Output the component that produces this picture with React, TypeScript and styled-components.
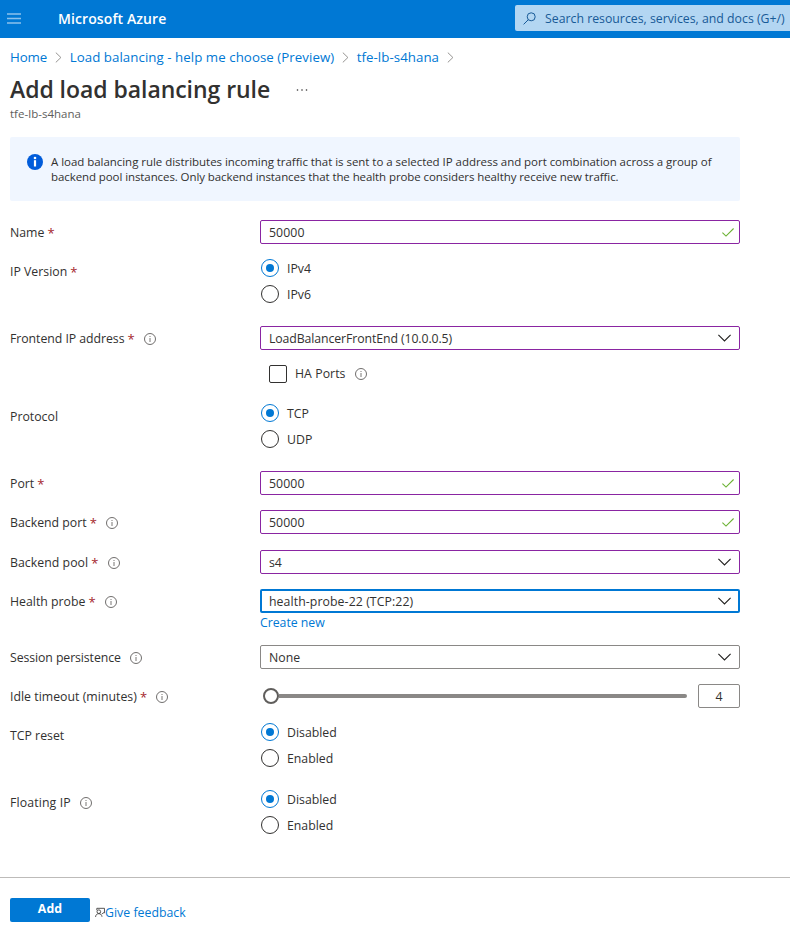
import React from 'react';
import styled, { createGlobalStyle } from 'styled-components';

const GlobalStyle = createGlobalStyle`
  *, *::before, *::after { box-sizing: border-box; }
  body { margin: 0; background: #fff; }
  body, button, input {
    font-family: "Open Sans", "Noto Sans", sans-serif;
    font-size: 12.3px;
    line-height: 18px;
    color: #323130;
  }
`;

const Page = styled.div`
  width: 790px;
  height: 932px;
  display: flex;
  flex-direction: column;
  overflow: hidden;
`;

const TopBar = styled.header`
  flex: none;
  height: 38px;
  display: flex;
  align-items: flex-start;
  background: #0078d4;
`;

const MenuButton = styled.button`
  width: 58px;
  height: 36px;
  padding: 0 0 0 7px;
  border: 0;
  background: none;
  display: flex;
  align-items: center;
`;

const Brand = styled.span`
  flex: 1;
  line-height: 38px;
  color: #fff;
  font-size: 14px;
  font-weight: 600;
  letter-spacing: 0.1px;
`;

const SearchBox = styled.div`
  width: 275px;
  height: 26px;
  margin-top: 5px;
  padding: 0 0 0 8px;
  display: flex;
  align-items: center;
  gap: 9px;
  border-radius: 2px 0 0 2px;
  background: #b3d6f2;
  color: #185a97;
  line-height: 26px;
  white-space: nowrap;
`;

const SearchHint = styled.span`
  padding-top: 2px;
`;

const Breadcrumb = styled.nav`
  height: 38px;
  padding-left: 10px;
  display: flex;
  align-items: center;
  white-space: nowrap;
`;

const Crumb = styled.a<{ $track?: number }>`
  color: #0078d4;
  font-size: 13.3px;
  letter-spacing: ${p => p.$track ?? 0}px;
`;

const CrumbSeparator = styled.svg`
  margin: 0 7.5px 0 8px;
`;

const Heading = styled.div`
  height: 28px;
  padding-left: 10px;
  display: flex;
  align-items: center;
`;

const Title = styled.h1`
  margin: -2px 0 0;
  width: 285px;
  font-size: 23px;
  font-weight: 600;
  line-height: 28px;
  letter-spacing: -0.05px;
`;

const Subtitle = styled.div`
  height: 33px;
  padding: 2px 0 0 10px;
  font-size: 11.5px;
  line-height: 16px;
  letter-spacing: 0.02px;
  color: #605e5c;
`;

const Notice = styled.section`
  flex: none;
  width: 730px;
  height: 64px;
  margin: 0 0 19px 10px;
  padding: 16px 0 0 16px;
  display: flex;
  gap: 8px;
  border-radius: 2px;
  background: #f0f6ff;
  font-size: 11.5px;
  line-height: 15px;
  white-space: nowrap;
`;

const NoticeText = styled.p`
  margin: 1px 0 0;
`;

const NoticeLine = styled.span<{ $track: number }>`
  display: block;
  letter-spacing: ${p => p.$track}px;
`;

const Form = styled.form`
  flex: 1;
  padding-left: 10px;
`;

const Row = styled.div<{ $height: number }>`
  width: 730px;
  height: ${p => p.$height}px;
  display: grid;
  grid-template-columns: 250px 480px;
`;

const Label = styled.div<{ $track?: number }>`
  height: 24px;
  padding-top: 2px;
  display: flex;
  align-items: center;
  letter-spacing: ${p => p.$track ?? 0}px;
  white-space: nowrap;
`;

const Required = styled.span`
  margin-left: 3px;
  color: #a4262c;
  font-size: 13px;
  letter-spacing: 0;
`;

const InfoSlot = styled.span`
  display: inline-flex;
  margin-left: 9.4px;
`;

type Tone = 'edited' | 'focused' | 'plain';
const borders: Record<Tone, string> = {
  edited: '1px solid #8a25a2',
  focused: '2px solid #0078d4',
  plain: '1px solid #8a8886',
};

const Field = styled.div<{ $tone: Tone }>`
  height: 24px;
  padding: 0 ${p => (p.$tone === 'focused' ? 6 : 7)}px 0 ${p => (p.$tone === 'focused' ? 7 : 8)}px;
  display: flex;
  align-items: center;
  justify-content: space-between;
  border: ${p => borders[p.$tone]};
  border-radius: 2px;
`;

const FieldValue = styled.span<{ $track?: number }>`
  padding-top: 2px;
  letter-spacing: ${p => p.$track ?? 0}px;
`;

const FieldMark = styled.span<{ $end: number }>`
  display: flex;
  margin-right: ${p => p.$end}px;
`;

const Options = styled.div`
  display: flex;
  flex-direction: column;
  gap: 8px;
  padding-left: 1px;
`;

const Option = styled.div`
  height: 18px;
  display: flex;
  align-items: center;
  gap: 8px;
`;

const OptionText = styled.span`
  padding-top: 2px;
`;

const Radio = styled.span<{ $on?: boolean }>`
  width: 18px;
  height: 18px;
  display: grid;
  place-items: center;
  border: 1px solid ${p => (p.$on ? '#0078d4' : '#323130')};
  border-radius: 50%;

  &::after {
    content: '';
    width: 8px;
    height: 8px;
    border-radius: 50%;
    background: ${p => (p.$on ? '#0078d4' : 'transparent')};
  }
`;

const CheckRow = styled.div`
  height: 18px;
  margin: 15px 0 0 9px;
  display: flex;
  align-items: center;
  letter-spacing: 0.05px;
`;

const CheckBox = styled.span`
  width: 18px;
  height: 18px;
  margin-right: 8px;
  border: 1px solid #323130;
  border-radius: 2px;
`;

const CreateLink = styled.a`
  display: block;
  padding-top: 1px;
  color: #0078d4;
  letter-spacing: -0.03px;
`;

const SliderRow = styled.div`
  height: 24px;
  display: flex;
  align-items: center;
  justify-content: space-between;
`;

const Slider = styled.div`
  width: 427px;
  padding-left: 3px;
  display: flex;
  align-items: center;
`;

const Thumb = styled.span`
  width: 16px;
  height: 16px;
  border: 2px solid #605e5c;
  border-radius: 50%;
`;

const Track = styled.span`
  flex: 1;
  height: 4px;
  border-radius: 0 4px 4px 0;
  background: #8a8886;
`;

const NumberBox = styled.div`
  width: 42px;
  height: 24px;
  border: 1px solid #8a8886;
  border-radius: 2px;
  line-height: 24px;
  text-align: center;
`;

const Footer = styled.footer`
  flex: none;
  height: 55px;
  padding: 20px 0 0 10px;
  display: flex;
  border-top: 1px solid #bdbbb9;
`;

const AddButton = styled.button`
  width: 80px;
  height: 24px;
  padding: 0 0 2px;
  border: 0;
  border-radius: 2px;
  background: #0078d4;
  color: #fff;
  font-weight: 700;
  line-height: 22px;
  letter-spacing: 0.1px;
`;

const Feedback = styled.a`
  height: 28px;
  margin-left: 5px;
  display: flex;
  align-items: center;
  color: #0078d4;
  letter-spacing: 0.02px;
`;

const FeedbackText = styled.span`
  padding-top: 2px;
`;

const InfoIcon = () => (
  <svg width="12" height="12" viewBox="0 0 12 12" fill="none">
    <circle cx="6" cy="6" r="5.5" stroke="#605e5c" strokeWidth="0.9" />
    <path d="M6 5v4" stroke="#797775" strokeWidth="1" />
    <path d="M6 3v1" stroke="#797775" strokeWidth="1" />
  </svg>
);

const Help = () => <InfoSlot><InfoIcon /></InfoSlot>;

const Chevron = () => (
  <FieldMark $end={1}>
    <svg width="13" height="8" viewBox="0 0 13 8" fill="none" stroke="#201f1e" strokeWidth="1.1">
      <path d="M0.4 0.9 6.5 7 12.6 0.9" />
    </svg>
  </FieldMark>
);

const Check = () => (
  <FieldMark $end={-2}>
    <svg width="12" height="9" viewBox="0 0 12 9" fill="none" stroke="#6bb233" strokeWidth="1.1">
      <path d="M0.4 4.6 4 8.1 11.6 0.5" />
    </svg>
  </FieldMark>
);

const Separator = () => (
  <CrumbSeparator width="7" height="11" viewBox="0 0 7 11" fill="none" stroke="#8a8886" strokeWidth="0.9">
    <path d="M0.8 0.6 5.9 5.5 0.8 10.4" />
  </CrumbSeparator>
);

interface RadioPairProps { options: [string, string]; }
const RadioPair = ({ options }: RadioPairProps) => (
  <Options>
    <Option><Radio $on /><OptionText>{options[0]}</OptionText></Option>
    <Option><Radio /><OptionText>{options[1]}</OptionText></Option>
  </Options>
);

interface TextFieldProps { value: string; }
const ValidatedField = ({ value }: TextFieldProps) => (
  <Field $tone="edited"><FieldValue $track={0.07}>{value}</FieldValue><Check /></Field>
);

interface DropdownProps { value: string; tone: Tone; track?: number; }
const Dropdown = ({ value, tone, track }: DropdownProps) => (
  <Field $tone={tone}><FieldValue $track={track}>{value}</FieldValue><Chevron /></Field>
);

export default function App() {
  return (
    <Page>
      <GlobalStyle />
      <TopBar>
        <MenuButton aria-label="Menu">
          <svg width="14" height="11" viewBox="0 0 14 11" stroke="#8cc1ec" strokeWidth="1.4">
            <path d="M0 1h14M0 5.5h14M0 10h14" />
          </svg>
        </MenuButton>
        <Brand>Microsoft Azure</Brand>
        <SearchBox>
          <svg width="13" height="13" viewBox="0 0 13 13" fill="none" stroke="#185a97" strokeWidth="1">
            <circle cx="8.2" cy="4.8" r="4" />
            <path d="M5.4 7.6 0.6 12.4" />
          </svg>
          <SearchHint>Search resources, services, and docs (G+/)</SearchHint>
        </SearchBox>
      </TopBar>

      <Breadcrumb>
        <Crumb $track={-0.1}>Home</Crumb>
        <Separator />
        <Crumb $track={0.045}>Load balancing - help me choose (Preview)</Crumb>
        <Separator />
        <Crumb $track={0.04}>tfe-lb-s4hana</Crumb>
        <Separator />
      </Breadcrumb>

      <Heading>
        <Title>Add load balancing rule</Title>
        <svg width="13" height="2" viewBox="0 0 13 2" fill="#323130">
          <circle cx="2.5" cy="1" r="0.8" />
          <circle cx="7" cy="1" r="0.8" />
          <circle cx="11.5" cy="1" r="0.8" />
        </svg>
      </Heading>
      <Subtitle>tfe-lb-s4hana</Subtitle>

      <Notice>
        <svg width="17" height="17" viewBox="0 0 17 17">
          <circle cx="9" cy="9" r="8" fill="#015cda" />
          <circle cx="9" cy="5" r="1.3" fill="#fff" />
          <path d="M9 7.2v6.3" stroke="#fff" strokeWidth="2.2" />
        </svg>
        <NoticeText>
          <NoticeLine $track={-0.04}>
            A load balancing rule distributes incoming traffic that is sent to a selected IP address and port combination across a group of
          </NoticeLine>
          <NoticeLine $track={-0.087}>
            backend pool instances. Only backend instances that the health probe considers healthy receive new traffic.
          </NoticeLine>
        </NoticeText>
      </Notice>

      <Form>
        <Row $height={39}>
          <Label>Name<Required>*</Required></Label>
          <ValidatedField value="50000" />
        </Row>
        <Row $height={67}>
          <Label>IP Version<Required>*</Required></Label>
          <RadioPair options={['IPv4', 'IPv6']} />
        </Row>
        <Row $height={78}>
          <Label $track={-0.05}>Frontend IP address<Required>*</Required><Help /></Label>
          <div>
            <Dropdown tone="edited" track={-0.1} value="LoadBalancerFrontEnd (10.0.0.5)" />
            <CheckRow><CheckBox />HA Ports<Help /></CheckRow>
          </div>
        </Row>
        <Row $height={67}>
          <Label>Protocol</Label>
          <RadioPair options={['TCP', 'UDP']} />
        </Row>
        <Row $height={39}>
          <Label>Port<Required>*</Required></Label>
          <ValidatedField value="50000" />
        </Row>
        <Row $height={40}>
          <Label>Backend port<Required>*</Required><Help /></Label>
          <ValidatedField value="50000" />
        </Row>
        <Row $height={39}>
          <Label $track={0.04}>Backend pool<Required>*</Required><Help /></Label>
          <Dropdown tone="edited" value="s4" />
        </Row>
        <Row $height={56}>
          <Label>Health probe<Required>*</Required><Help /></Label>
          <div>
            <Dropdown tone="focused" track={0.08} value="health-probe-22 (TCP:22)" />
            <CreateLink>Create new</CreateLink>
          </div>
        </Row>
        <Row $height={39}>
          <Label $track={-0.09}>Session persistence<Help /></Label>
          <Dropdown tone="plain" value="None" />
        </Row>
        <Row $height={39}>
          <Label $track={0.02}>Idle timeout (minutes)<Required>*</Required><Help /></Label>
          <SliderRow>
            <Slider><Thumb /><Track /></Slider>
            <NumberBox>4</NumberBox>
          </SliderRow>
        </Row>
        <Row $height={67}>
          <Label>TCP reset</Label>
          <RadioPair options={['Disabled', 'Enabled']} />
        </Row>
        <Row $height={52}>
          <Label $track={0.12}>Floating IP<Help /></Label>
          <RadioPair options={['Disabled', 'Enabled']} />
        </Row>
      </Form>

      <Footer>
        <AddButton>Add</AddButton>
        <Feedback>
          <svg width="10" height="11" viewBox="0 0 11 11" fill="none" stroke="#323130" strokeWidth="0.9">
            <path d="M2 3V0.9h8.4v5H8.8L7.4 7.4" />
            <circle cx="4.2" cy="4.6" r="2" />
            <path d="M0.6 10.4C0.8 8 2.2 6.8 4.2 6.8S7.4 8 7.7 10.2" />
          </svg>
          <FeedbackText>Give feedback</FeedbackText>
        </Feedback>
      </Footer>
    </Page>
  );
}
